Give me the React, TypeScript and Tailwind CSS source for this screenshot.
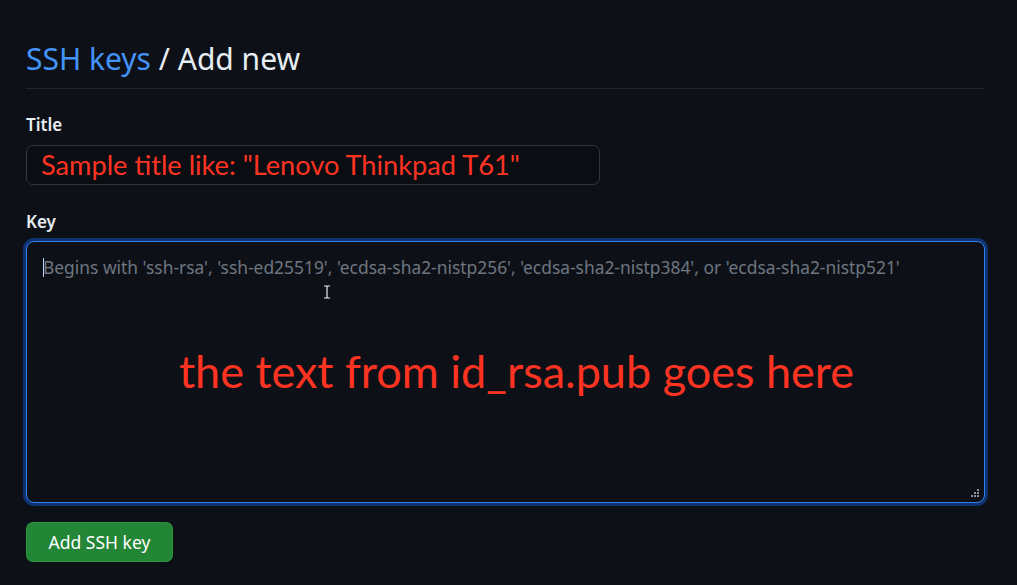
import React from "react";

export default function App() {
  const ui = { fontFamily: '"Noto Sans", "Open Sans", sans-serif' };
  const red = { fontFamily: 'Lato, "Noto Sans", sans-serif' };
  return (
    <div className="w-[1017px] h-[585px] bg-[#0d1117] overflow-hidden relative" style={ui}>
      <div className="pl-[26px] pt-[40px]">
        <div className="w-[959px] border-b border-[#21262d] pb-[10px]">
          <h2 className="text-[30px] leading-[38px] font-normal text-[#e6edf3]">
            <span className="text-[#4493f8]">SSH keys</span> / Add new
          </h2>
        </div>
        <div className="mt-[25px]">
          <label className="block text-[17px] leading-[22px] font-semibold text-[#e6edf3]">Title</label>
          <div className="mt-[9px] w-[574px] h-[40px] rounded-[7px] border border-[#30363d] bg-[#0a0d12] flex items-center pl-[14px]">
            <span className="text-[27.2px] text-[#ff3322] leading-none" style={red}>
              Sample title like: "Lenovo Thinkpad T61"
            </span>
          </div>
        </div>
        <div className="mt-[26px]">
          <label className="block text-[17px] leading-[22px] font-semibold text-[#e6edf3]">Key</label>
          <div className="mt-[8px] w-[959px] h-[262px] rounded-[8px] border border-[#2f81f7] ring-[3px] ring-[#0f3370] bg-[#0d1117] relative">
            <div className="absolute left-[16px] top-[16px] w-px h-[19px] bg-[#c9d1d9]"></div>
            <div className="pl-[16px] pt-[13px] text-[17.4px] leading-[24px] text-[#6e7681] whitespace-nowrap">
              Begins with 'ssh-rsa', 'ssh-ed25519', 'ecdsa-sha2-nistp256', 'ecdsa-sha2-nistp384', or 'ecdsa-sha2-nistp521'
            </div>
            <div className="flex justify-center mt-[70px] pl-[22px]">
              <span className="text-[45px] leading-none text-[#ff3322]" style={red}>
                the text from id_rsa.pub goes here
              </span>
            </div>
            <svg className="absolute right-[4px] bottom-[4px]" width="9" height="9" viewBox="0 0 9 9">
              <rect x="6" y="0" width="2" height="2" fill="#8b949e" />
              <rect x="3" y="3" width="2" height="2" fill="#8b949e" />
              <rect x="6" y="3" width="2" height="2" fill="#8b949e" />
              <rect x="0" y="6" width="2" height="2" fill="#8b949e" />
              <rect x="3" y="6" width="2" height="2" fill="#8b949e" />
              <rect x="6" y="6" width="2" height="2" fill="#8b949e" />
            </svg>
            <svg className="absolute left-[296px] top-[43px]" width="8" height="14" viewBox="0 0 8 14">
              <path d="M1 1h6M1 13h6M4 1v12" stroke="#e6edf3" strokeWidth="1.2" fill="none" />
            </svg>
          </div>
        </div>
        <button className="mt-[19px] w-[147px] h-[40px] rounded-[7px] bg-[#238636] border border-[#2ea043]/60 text-white text-[17.5px] flex items-center justify-center">
          Add SSH key
        </button>
      </div>
    </div>
  );
}
